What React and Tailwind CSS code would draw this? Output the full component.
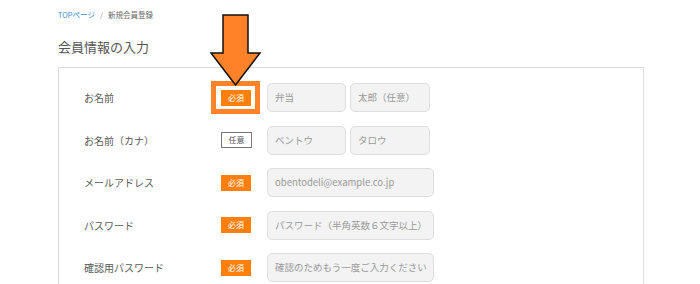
import React from "react";

const font = { fontFamily: '"Noto Sans CJK JP", "Noto Sans", sans-serif' };

function Required() {
    return (
        <span className="flex h-[16px] w-[30px] items-center justify-center bg-[#fe7f0a] text-[8px] text-white">
            必須
        </span>
    );
}

function Optional() {
    return (
        <span className="flex h-[16px] w-[31px] items-center justify-center border border-[#777] bg-white text-[8px] text-[#555]">
            任意
        </span>
    );
}

function Field({ placeholder, width }) {
    return (
        <div
            className={`flex h-[29px] items-center overflow-hidden whitespace-nowrap rounded-[5px] border border-[#dedede] bg-[#f3f3f3] pl-[7px] text-[9.5px] text-[#999] ${width}`}>
            {placeholder}
        </div>
    );
}

function Row({ label, badge, children }) {
    return (
        <div className="flex h-[29px] items-center">
            <div className="w-[137px] text-[10px] text-[#5a5a5a]">{label}</div>
            <div className="w-[46px]">{badge}</div>
            <div className="flex gap-[4px]">{children}</div>
        </div>
    );
}

export default function App() {
    return (
        <div className="relative h-[284px] w-[700px] overflow-hidden bg-white" style={font}>
            <div className="ml-[58px] w-[586px]">
                <div className="flex h-[28px] items-center gap-[5px] pt-[1px] text-[7.5px]">
                    <span className="text-[#3b8ad0]">TOPページ</span>
                    <span className="text-[#999]">/</span>
                    <span className="text-[#666]">新規会員登録</span>
                </div>
                <h1 className="flex h-[39px] items-center pb-[2px] text-[13px] font-normal text-[#555]">会員情報の入力</h1>
                <div className="flex h-[240px] flex-col gap-[13.5px] border border-[#dcdcdc] pl-[25px] pt-[15px]">
                    <Row
                        label="お名前"
                        badge={
                            <div className="relative w-[30px]">
                                <Required />
                                <div className="absolute -left-[10px] -right-[9px] -top-[9px] -bottom-[8px] border-[5px] border-[#ff8228]" />
                            </div>
                        }>
                        <Field placeholder="弁当" width="w-[79px]" />
                        <Field placeholder="太郎（任意）" width="w-[80px]" />
                    </Row>
                    <Row label="お名前（カナ）" badge={<Optional />}>
                        <Field placeholder="ベントウ" width="w-[79px]" />
                        <Field placeholder="タロウ" width="w-[80px]" />
                    </Row>
                    <Row label="メールアドレス" badge={<Required />}>
                        <Field placeholder="obentodeli@example.co.jp" width="w-[167px]" />
                    </Row>
                    <Row label="パスワード" badge={<Required />}>
                        <Field placeholder="パスワード（半角英数６文字以上）" width="w-[167px]" />
                    </Row>
                    <Row label="確認用パスワード" badge={<Required />}>
                        <Field placeholder="確認のためもう一度ご入力ください" width="w-[167px]" />
                    </Row>
                </div>
            </div>

            {/* annotation arrow */}
            <svg className="absolute left-0 top-0" width="700" height="284">
                <path
                    d="M223 15 H248 V53 H260 L235.5 85 L211 53 H223 Z"
                    fill="#ff8228"
                    stroke="#111"
                    strokeWidth="1.5"
                    strokeLinejoin="miter"
                />
            </svg>
        </div>
    );
}
